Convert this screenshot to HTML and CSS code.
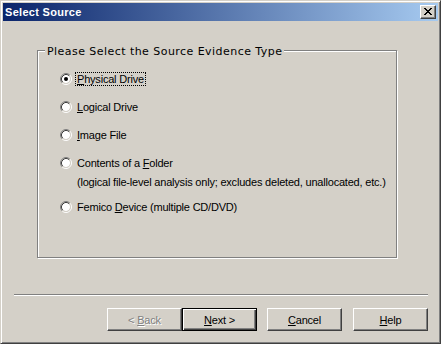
FILE: index.html
```html
<!DOCTYPE html>
<html lang="en">
<head>
    <meta charset="UTF-8">
    <title>Select Source</title>
    <link rel="stylesheet" href="styles.css">
</head>
<body>
    <div class="window">
        <div class="titlebar">
            <span class="title">Select Source</span>
            <span class="close">
                <svg width="8" height="7" viewBox="0 0 8 7" shape-rendering="crispEdges"><path d="M0 0h2v1H0z M6 0h2v1H6z M1 1h2v1H1z M5 1h2v1H5z M2 2h4v1H2z M3 3h2v1H3z M2 4h4v1H2z M1 5h2v1H1z M5 5h2v1H5z M0 6h2v1H0z M6 6h2v1H6z"/></svg>
            </span>
        </div>
        <div class="client">
            <div class="group">
                <span class="group-label">Please Select the Source Evidence Type</span>
                <div class="options">
                    <div class="option">
                        <div class="option-row">
                            <svg class="radio" width="12" height="12" viewBox="0 0 12 12"><circle cx="6" cy="6" r="4" fill="#fff"/><path d="M2.11 9.89A5.5 5.5 0 0 1 9.89 2.11" fill="none" stroke="#808080"/><path d="M9.89 2.11A5.5 5.5 0 0 1 2.11 9.89" fill="none" stroke="#fff"/><path d="M2.82 9.18A4.5 4.5 0 0 1 9.18 2.82" fill="none" stroke="#404040"/><path d="M9.18 2.82A4.5 4.5 0 0 1 2.82 9.18" fill="none" stroke="#d4d0c8"/><circle cx="6" cy="6" r="2"/></svg>
                            <span class="label focus"><u>P</u>hysical Drive</span>
                        </div>
                    </div>
                    <div class="option">
                        <div class="option-row">
                            <svg class="radio" width="12" height="12" viewBox="0 0 12 12"><circle cx="6" cy="6" r="4" fill="#fff"/><path d="M2.11 9.89A5.5 5.5 0 0 1 9.89 2.11" fill="none" stroke="#808080"/><path d="M9.89 2.11A5.5 5.5 0 0 1 2.11 9.89" fill="none" stroke="#fff"/><path d="M2.82 9.18A4.5 4.5 0 0 1 9.18 2.82" fill="none" stroke="#404040"/><path d="M9.18 2.82A4.5 4.5 0 0 1 2.82 9.18" fill="none" stroke="#d4d0c8"/></svg>
                            <span class="label"><u>L</u>ogical Drive</span>
                        </div>
                    </div>
                    <div class="option">
                        <div class="option-row">
                            <svg class="radio" width="12" height="12" viewBox="0 0 12 12"><circle cx="6" cy="6" r="4" fill="#fff"/><path d="M2.11 9.89A5.5 5.5 0 0 1 9.89 2.11" fill="none" stroke="#808080"/><path d="M9.89 2.11A5.5 5.5 0 0 1 2.11 9.89" fill="none" stroke="#fff"/><path d="M2.82 9.18A4.5 4.5 0 0 1 9.18 2.82" fill="none" stroke="#404040"/><path d="M9.18 2.82A4.5 4.5 0 0 1 2.82 9.18" fill="none" stroke="#d4d0c8"/></svg>
                            <span class="label"><u>I</u>mage File</span>
                        </div>
                    </div>
                    <div class="option">
                        <div class="option-row">
                            <svg class="radio" width="12" height="12" viewBox="0 0 12 12"><circle cx="6" cy="6" r="4" fill="#fff"/><path d="M2.11 9.89A5.5 5.5 0 0 1 9.89 2.11" fill="none" stroke="#808080"/><path d="M9.89 2.11A5.5 5.5 0 0 1 2.11 9.89" fill="none" stroke="#fff"/><path d="M2.82 9.18A4.5 4.5 0 0 1 9.18 2.82" fill="none" stroke="#404040"/><path d="M9.18 2.82A4.5 4.5 0 0 1 2.82 9.18" fill="none" stroke="#d4d0c8"/></svg>
                            <span class="label">Contents of a <u>F</u>older</span>
                        </div>
                        <div class="note">(logical file-level analysis only; excludes deleted, unallocated, etc.)</div>
                    </div>
                    <div class="option">
                        <div class="option-row">
                            <svg class="radio" width="12" height="12" viewBox="0 0 12 12"><circle cx="6" cy="6" r="4" fill="#fff"/><path d="M2.11 9.89A5.5 5.5 0 0 1 9.89 2.11" fill="none" stroke="#808080"/><path d="M9.89 2.11A5.5 5.5 0 0 1 2.11 9.89" fill="none" stroke="#fff"/><path d="M2.82 9.18A4.5 4.5 0 0 1 9.18 2.82" fill="none" stroke="#404040"/><path d="M9.18 2.82A4.5 4.5 0 0 1 2.82 9.18" fill="none" stroke="#d4d0c8"/></svg>
                            <span class="label">Femico <u>D</u>evice (multiple CD/DVD)</span>
                        </div>
                    </div>
                </div>
            </div>
            <div class="separator"></div>
            <div class="buttons">
                <button class="button" disabled>&lt; <u>B</u>ack</button>
                <button class="button default"><u>N</u>ext &gt;</button>
                <button class="button cancel"><u>C</u>ancel</button>
                <button class="button help"><u>H</u>elp</button>
            </div>
        </div>
    </div>
</body>
</html>
```

FILE: styles.css
```css
body {
    margin: 0;
    font-family: "Liberation Sans", Arial, sans-serif;
    font-size: 11px;
    letter-spacing: -0.2px;
    color: #000;
}
.window {
    box-sizing: border-box;
    width: 441px;
    height: 344px;
    padding: 2px;
    background-color: #d4d0c8;
    border: 1px solid;
    border-color: #d4d0c8 #404040 #404040 #d4d0c8;
    box-shadow: inset 1px 1px #fff, inset -1px -1px #808080;
}
.titlebar {
    height: 18px;
    display: flex;
    align-items: center;
    padding: 0 2px;
    background: linear-gradient(to right, #0a246a, #a6caf0);
}
.title {
    color: #fff;
    font-weight: bold;
    letter-spacing: 0.3px;
}
.close {
    margin-left: auto;
    box-sizing: border-box;
    width: 16px;
    height: 14px;
    padding: 2px 0 0 3px;
    background-color: #d4d0c8;
    border: 1px solid;
    border-color: #fff #404040 #404040 #fff;
    box-shadow: inset -1px -1px #808080;
}
.close svg {
    display: block;
}
.group {
    position: relative;
    box-sizing: border-box;
    width: 360px;
    height: 208px;
    margin: 29px 0 0 34px;
    border: 1px solid #808080;
    box-shadow: 1px 1px #fff, inset 1px 1px #fff;
}
.group-label {
    position: absolute;
    left: 7px;
    top: -6px;
    padding: 0 2px;
    font-family: "DejaVu Sans", Verdana, sans-serif;
    letter-spacing: 0.45px;
    line-height: 13px;
    background-color: #d4d0c8;
}
.options {
    display: flex;
    flex-direction: column;
    gap: 14px;
    padding: 21px 0 0 22px;
}
.option-row {
    display: flex;
    align-items: center;
    height: 14px;
}
.radio {
    display: block;
    flex: none;
}
.label {
    margin-left: 3px;
    padding: 0 1px;
    line-height: 12px;
    border: 1px dotted transparent;
}
.label.focus {
    border-color: #000;
}
.note {
    margin: 6px 0 -2px 17px;
    line-height: 12px;
    white-space: nowrap;
}
.separator {
    margin: 36px 10px 0 11px;
    border-top: 1px solid #808080;
    border-bottom: 1px solid #fff;
}
.buttons {
    display: flex;
    justify-content: flex-end;
    margin-top: 12px;
    padding-right: 10px;
}
.button {
    box-sizing: border-box;
    width: 75px;
    height: 23px;
    padding: 0;
    font: inherit;
    letter-spacing: inherit;
    color: #000;
    background-color: #d4d0c8;
    border: 1px solid;
    border-color: #fff #404040 #404040 #fff;
    box-shadow: inset -1px -1px #808080;
}
.button.default {
    border-color: #000;
    box-shadow: inset 1px 1px #fff, inset -1px -1px #404040, inset -2px -2px #808080;
}
.button:disabled {
    color: #808080;
    text-shadow: 1px 1px #fff;
}
.cancel {
    margin-left: 10px;
}
.help {
    margin-left: 11px;
}
```
